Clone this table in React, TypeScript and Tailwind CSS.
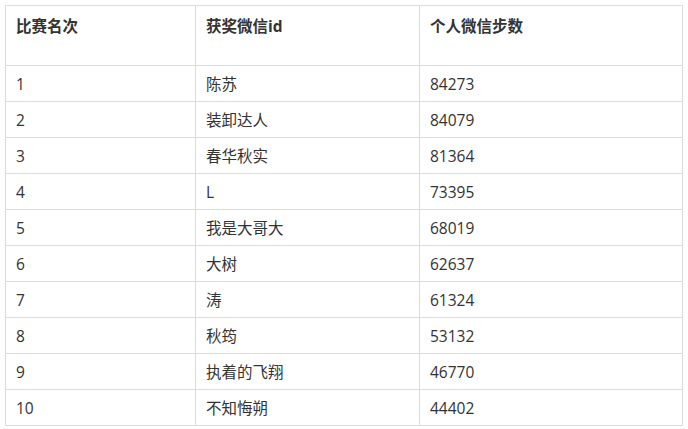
import React from "react";

const rows: [string, string, string][] = [
  ["1", "陈苏", "84273"],
  ["2", "装卸达人", "84079"],
  ["3", "春华秋实", "81364"],
  ["4", "L", "73395"],
  ["5", "我是大哥大", "68019"],
  ["6", "大树", "62637"],
  ["7", "涛", "61324"],
  ["8", "秋筠", "53132"],
  ["9", "执着的飞翔", "46770"],
  ["10", "不知悔朔", "44402"],
];

export default function App() {
  return (
    <div
      className="w-[688px] h-[429px] bg-white pt-[5px] pl-[5px] overflow-hidden"
      style={{ fontFamily: '"Open Sans", "Noto Sans CJK SC", sans-serif' }}
    >
      <table className="border-collapse text-[15.5px] text-[#333] table-fixed w-[677px]">
        <colgroup>
          <col className="w-[190px]" />
          <col className="w-[224px]" />
          <col className="w-[263px]" />
        </colgroup>
        <thead>
          <tr className="h-[60px]">
            {["比赛名次", "获奖微信id", "个人微信步数"].map((h) => (
              <th
                key={h}
                className="border border-[#dcdcdc] align-top text-left font-bold pl-[10px] pt-[9px] leading-[22px]"
              >
                {h}
              </th>
            ))}
          </tr>
        </thead>
        <tbody>
          {rows.map((r) => (
            <tr key={r[0]} className="h-[36px]">
              {r.map((c, i) => (
                <td
                  key={i}
                  className="border border-[#dcdcdc] pl-[10px] align-middle leading-[22px]"
                >
                  {c}
                </td>
              ))}
            </tr>
          ))}
        </tbody>
      </table>
    </div>
  );
}
